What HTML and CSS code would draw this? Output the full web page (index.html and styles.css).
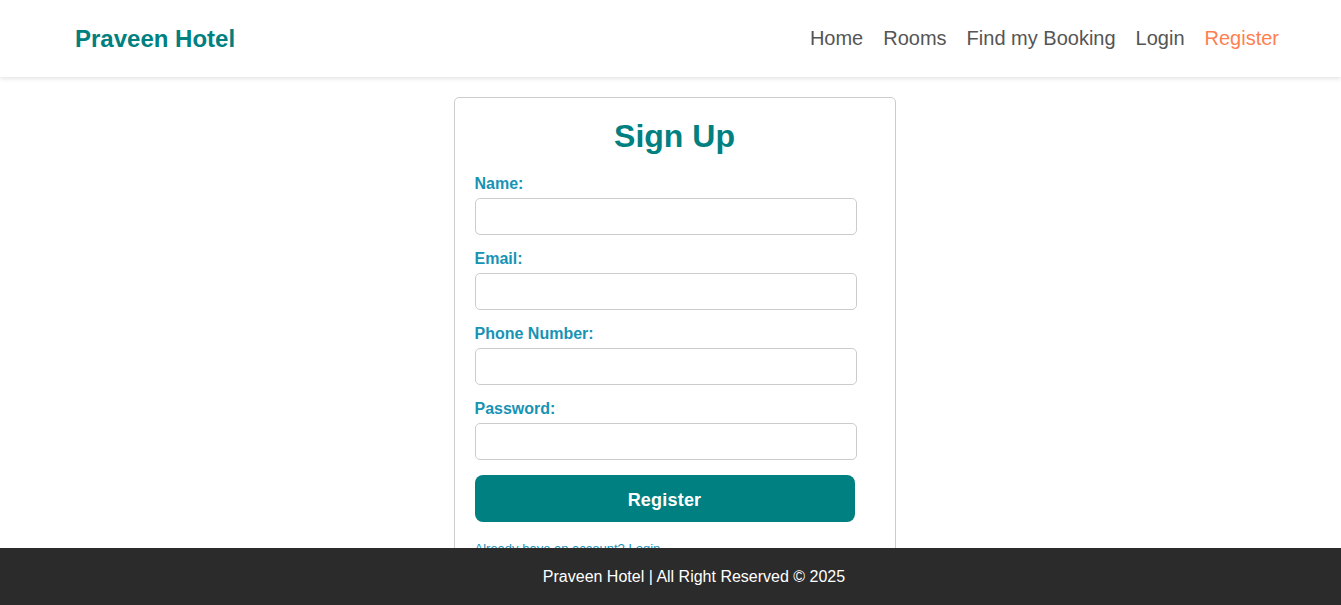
FILE: index.html
```html
<!DOCTYPE html>
<html lang="en">
<head>
<meta charset="UTF-8">
<title>Praveen Hotel - Sign Up</title>
<link rel="stylesheet" href="styles.css">
</head>
<body>
<header class="site-header">
  <a class="logo" href="#">Praveen Hotel</a>
  <nav class="nav">
    <a href="#">Home</a>
    <a href="#">Rooms</a>
    <a href="#">Find my Booking</a>
    <a href="#">Login</a>
    <a href="#" class="active">Register</a>
  </nav>
</header>
<main class="main">
  <div class="card">
    <h2 class="title">Sign Up</h2>
    <form class="form">
      <label for="name">Name:</label>
      <input id="name" type="text">
      <label for="email">Email:</label>
      <input id="email" type="email">
      <label for="phone">Phone Number:</label>
      <input id="phone" type="tel">
      <label for="password">Password:</label>
      <input id="password" type="password">
      <button type="button" class="btn">Register</button>
    </form>
    <p class="alt"><a href="#">Already have an account? Login</a></p>
  </div>
</main>
<footer class="footer">Praveen Hotel | All Right Reserved © 2025</footer>
</body>
</html>
```
FILE: styles.css
```css
* { box-sizing: border-box; }
html, body { margin: 0; padding: 0; }
body {
  font-family: "Liberation Sans", Arial, sans-serif;
  background: #fff;
  color: #333;
}
.site-header {
  height: 77px;
  display: flex;
  align-items: center;
  justify-content: space-between;
  padding: 0 62px 0 75px;
  background: #fff;
  box-shadow: 0 2px 4px rgba(0,0,0,0.1);
}
.logo {
  font-size: 24px;
  font-weight: bold;
  color: #008080;
  text-decoration: none;
}
.nav {
  display: flex;
  gap: 20px;
}
.nav a {
  font-size: 20px;
  color: #555;
  text-decoration: none;
}
.nav a.active { color: #ff7f50; }
.main {
  display: flex;
  justify-content: center;
  padding: 20px 0 0 8px;
}
.card {
  width: 442px;
  border: 1px solid #ccc;
  border-radius: 5px;
  padding: 20px 20px 15px;
}
.title {
  margin: 0 0 20px;
  text-align: center;
  font-size: 32px;
  color: #008080;
  line-height: 37px;
}
.form { display: flex; flex-direction: column; align-items: flex-start; }
.form label {
  font-size: 16px;
  font-weight: bold;
  color: #1793b5;
  line-height: 18px;
  margin-bottom: 5px;
}
.form input {
  width: 382px;
  height: 37px;
  border: 1px solid #ccc;
  border-radius: 5px;
  margin-bottom: 15px;
  padding: 8px;
  font-size: 16px;
}
.btn {
  width: 380px;
  height: 47px;
  padding: 3px 0 0;
  border: none;
  border-radius: 8px;
  background: #008080;
  color: #fff;
  font-family: "Liberation Sans", Arial, sans-serif;
  font-size: 18px;
  font-weight: bold;
  letter-spacing: 0.2px;
}
.alt {
  margin: 19px 0 0;
  font-size: 13px;
}
.alt a { color: #1793b5; text-decoration: none; }
.footer {
  position: fixed;
  left: 0;
  right: 0;
  bottom: 0;
  height: 57px;
  padding-left: 47px;
  background: #2b2b2b;
  color: #fff;
  font-size: 16px;
  display: flex;
  align-items: center;
  justify-content: center;
}
```
